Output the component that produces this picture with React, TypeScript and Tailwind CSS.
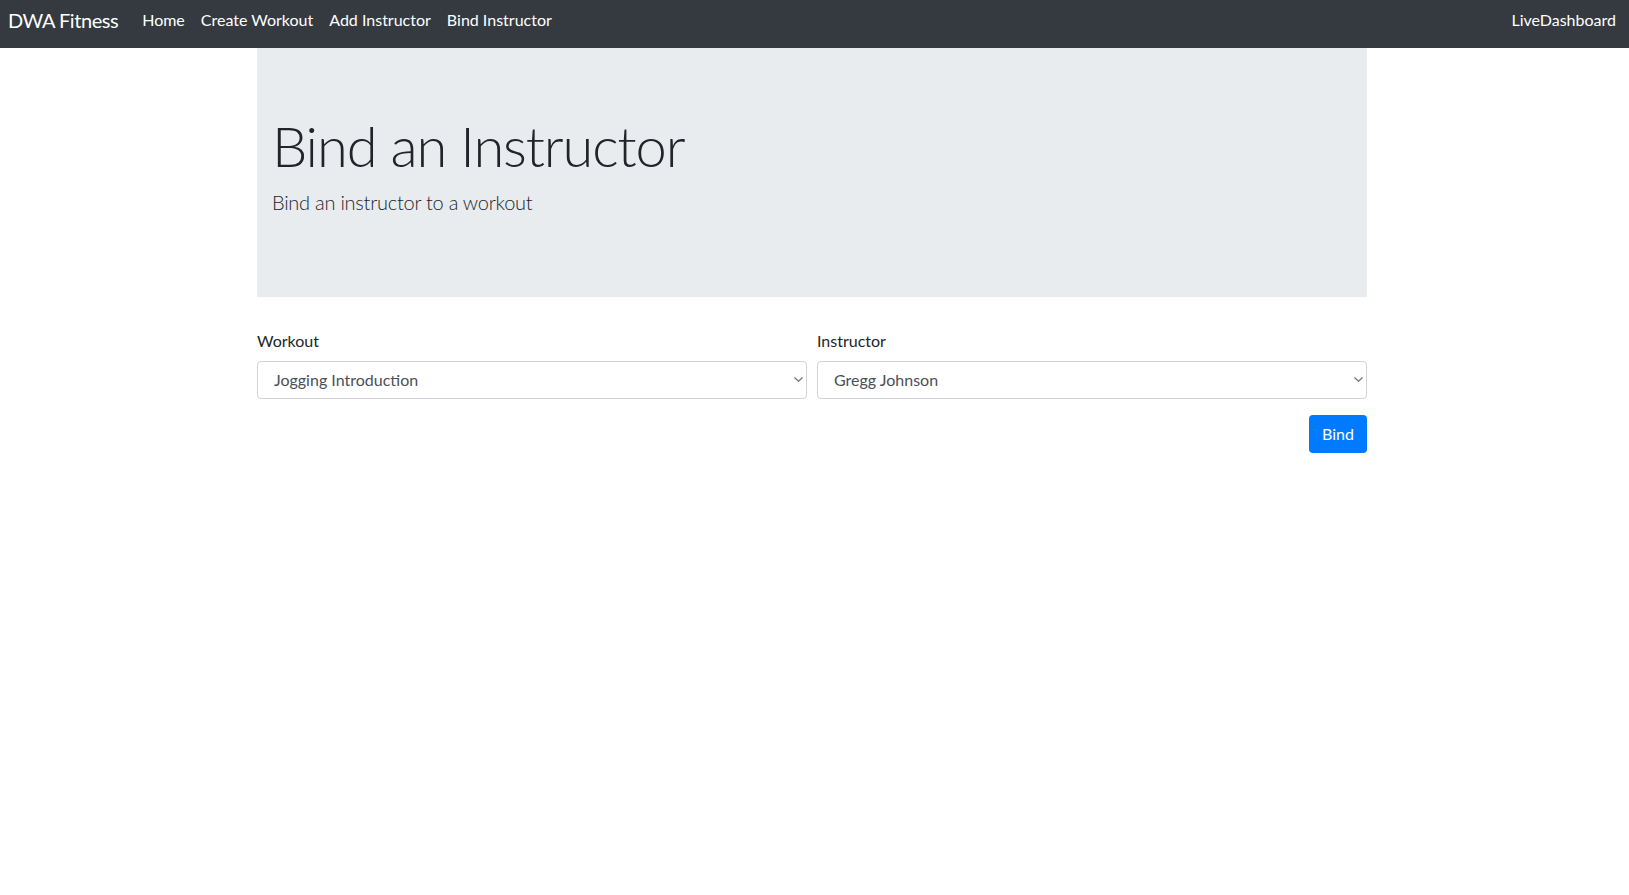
import React from "react";

function Chevron() {
  return (
    <svg
      width="9"
      height="5"
      viewBox="0 0 9 5"
      className="pointer-events-none absolute right-[4px] top-[16px]"
      fill="none"
    >
      <path d="M0.5 0.5L4.5 4.2L8.5 0.5" stroke="#707070" strokeWidth="1.2" />
    </svg>
  );
}

function SelectField({ id, label, value }: { id: string; label: string; value: string }) {
  return (
    <div className="mb-4">
      <label htmlFor={id} className="mb-2 block text-[16px] leading-6 text-[#212529]">
        {label}
      </label>
      <div className="relative">
        <select
          id={id}
          defaultValue={value}
          className="block h-[38px] w-full appearance-none rounded-[4px] border border-[#ced4da] bg-white pl-[16px] pr-[28px] text-[16px] leading-6 text-[#495057] outline-none"
        >
          <option value={value}>{value}</option>
        </select>
        <Chevron />
      </div>
    </div>
  );
}

export default function App() {
  return (
    <div className="min-h-screen bg-white" style={{ fontFamily: "Lato, 'Open Sans', sans-serif" }}>
      <nav className="flex h-[48px] items-start bg-[#343a40] px-2">
        <a href="#" className="mr-4 pt-[5px] text-[20px] leading-[30px] tracking-[-0.45px] text-white">
          DWA Fitness
        </a>
        <ul className="flex pt-[8px]">
          {["Home", "Create Workout", "Add Instructor", "Bind Instructor"].map((t) => (
            <li key={t}>
              <a href="#" className="block px-2 text-[16px] leading-6 text-white">
                {t}
              </a>
            </li>
          ))}
        </ul>
        <a href="#" className="ml-auto block px-[5px] pt-[8px] text-[16px] leading-6 text-white">
          LiveDashboard
        </a>
      </nav>

      <main className="ml-[257px] w-[1110px]">
        <section className="mb-8 bg-[#e9ecef] px-[15px] py-16">
          <h1 className="mb-2 text-[56px] font-light leading-[1.2] tracking-[-1.1px] text-[#212529]">
            Bind an Instructor
          </h1>
          <p className="mb-4 text-[20px] font-light leading-[30px] tracking-[-0.25px] text-[#212529]">
            Bind an instructor to a workout
          </p>
        </section>

        <form onSubmit={(e) => e.preventDefault()}>
          <div className="grid grid-cols-2 gap-x-[10px]">
            <SelectField id="workout" label="Workout" value="Jogging Introduction" />
            <SelectField id="instructor" label="Instructor" value="Gregg Johnson" />
          </div>
          <div className="flex justify-end">
            <button
              type="submit"
              className="rounded-[4px] border border-transparent bg-[#007bff] px-3 py-[6px] text-[16px] leading-6 text-white"
            >
              Bind
            </button>
          </div>
        </form>
      </main>
    </div>
  );
}
